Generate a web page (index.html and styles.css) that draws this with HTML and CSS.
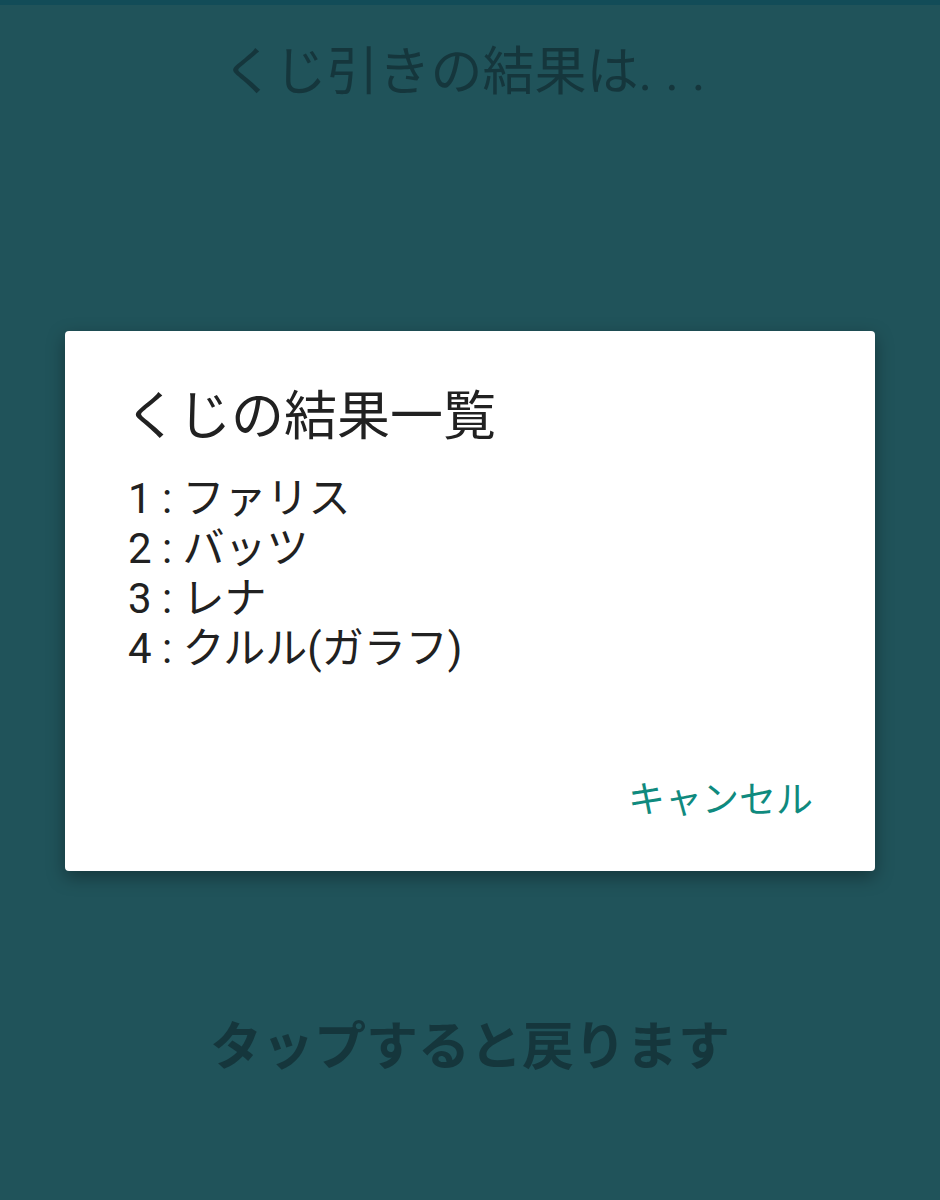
FILE: index.html
```html
<!DOCTYPE html>
<html lang="ja">
<head>
<meta charset="utf-8">
<title>くじ引きの結果</title>
<link rel="stylesheet" href="styles.css">
</head>
<body>
<div class="screen">
  <div class="status-strip"></div>
  <h1 class="heading">くじ引きの結果は. . .</h1>
  <div class="dialog">
    <h2 class="dialog-title">くじの結果一覧</h2>
    <ul class="result-list">
      <li>1 : ファリス</li>
      <li>2 : バッツ</li>
      <li>3 : レナ</li>
      <li>4 : クルル(ガラフ)</li>
    </ul>
    <div class="dialog-actions">
      <span class="btn-cancel">キャンセル</span>
    </div>
  </div>
  <p class="footer-text">タップすると戻ります</p>
</div>
</body>
</html>
```
FILE: styles.css
```css
html, body {
  margin: 0;
  padding: 0;
  background: #20535a;
}
.screen {
  width: 940px;
  height: 1200px;
  display: flex;
  flex-direction: column;
  align-items: center;
  font-family: Roboto, "Noto Sans CJK JP", sans-serif;
  background: #20535a;
}
.status-strip {
  align-self: stretch;
  height: 5px;
  background: #124c58;
}
.heading {
  margin: 40px 0 0;
  padding-right: 12px;
  font-size: 52px;
  line-height: 56px;
  font-weight: 400;
  color: #15363c;
}
.dialog {
  box-sizing: border-box;
  margin-top: 230px;
  width: 810px;
  height: 540px;
  background: #ffffff;
  border-radius: 4px;
  box-shadow: 0 6px 18px rgba(0, 0, 0, 0.35);
  padding: 56px 64px 0 60px;
  display: flex;
  flex-direction: column;
}
.dialog-title {
  margin: 0;
  font-size: 53px;
  line-height: 60px;
  font-weight: 400;
  color: #212121;
}
.result-list {
  list-style: none;
  margin: 27px 0 0;
  padding: 0 0 0 3px;
  font-size: 42px;
  line-height: 50px;
  color: #212121;
}
.dialog-actions {
  margin-top: auto;
  margin-bottom: 48px;
  display: flex;
  justify-content: flex-end;
}
.btn-cancel {
  font-size: 37px;
  line-height: 44px;
  color: #0f8a7e;
  margin-right: -2px;
}
.footer-text {
  margin: 149px 0 0;
  font-size: 52px;
  line-height: 56px;
  font-weight: 700;
  color: #15363c;
}
```
